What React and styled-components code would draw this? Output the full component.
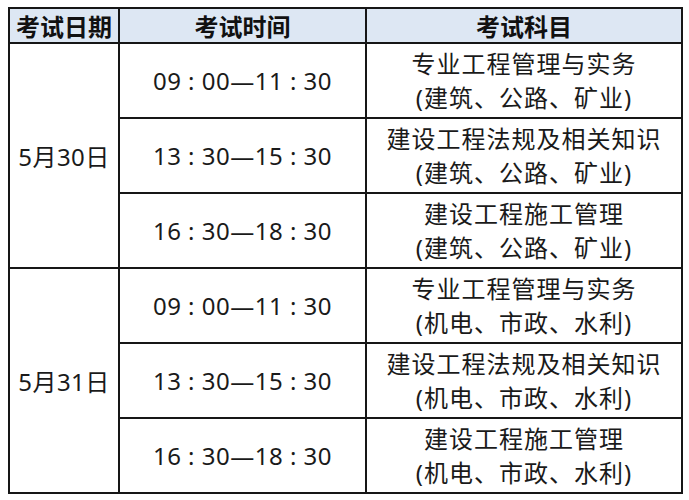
import React from 'react'
import styled, { createGlobalStyle } from 'styled-components'

const GlobalStyle = createGlobalStyle`
  html, body {
    margin: 0;
    padding: 0;
    background: #fff;
  }
  body {
    font-family: "Noto Sans", "Noto Sans CJK SC", sans-serif;
    color: #141414;
  }
`

const SCHEDULE = [
    {
        date: '5月30日',
        group: '(建筑、公路、矿业)',
    },
    {
        date: '5月31日',
        group: '(机电、市政、水利)',
    },
]

const SESSIONS = [
    { time: '09 : 00—11 : 30', subject: '专业工程管理与实务' },
    { time: '13 : 30—15 : 30', subject: '建设工程法规及相关知识' },
    { time: '16 : 30—18 : 30', subject: '建设工程施工管理' },
]

export default function App() {
    return (
        <>
            <GlobalStyle />
            <Page>
                <Table>
                    <colgroup>
                        <col style={{ width: 110 }} />
                        <col style={{ width: 247 }} />
                        <col style={{ width: 316 }} />
                    </colgroup>
                    <thead>
                        <tr>
                            <HeadCell>考试日期</HeadCell>
                            <HeadCell>考试时间</HeadCell>
                            <HeadCell>考试科目</HeadCell>
                        </tr>
                    </thead>
                    <tbody>
                        {SCHEDULE.map(day => SESSIONS.map((s, i) => (
                            <Row key={day.date + i}>
                                {i === 0 && <DateCell rowSpan={3}>{day.date}</DateCell>}
                                <TimeCell>{s.time}</TimeCell>
                                <SubjectCell>
                                    <Line>{s.subject}</Line>
                                    <Line>{day.group}</Line>
                                </SubjectCell>
                            </Row>
                        )))}
                    </tbody>
                </Table>
            </Page>
        </>
    )
}

const Page = styled.div`
  padding: 7px 8px;
`

const Table = styled.table`
  width: 673px;
  border-collapse: collapse;
  table-layout: fixed;
  border: 2px solid #161616;
`

const HeadCell = styled.th`
  height: 33px;
  padding: 0;
  background: #dde7f3;
  border: 2px solid #161616;
  font-family: "Noto Sans CJK SC", sans-serif;
  font-weight: 700;
  font-size: 24px;
  line-height: 33px;
  text-align: center;
  color: #111;
`

const Row = styled.tr`
  height: 75px;
`

const Cell = styled.td`
  padding: 0;
  border: 2px solid #161616;
  text-align: center;
  vertical-align: middle;
  font-size: 24px;
  color: #1a1a1a;
`

const DateCell = styled(Cell)`
  letter-spacing: 0.5px;
`

const TimeCell = styled(Cell)`
  letter-spacing: 0.5px;
`

const SubjectCell = styled(Cell)`
  line-height: 34px;
  letter-spacing: 1px;
`

const Line = styled.div`
  white-space: nowrap;
`
